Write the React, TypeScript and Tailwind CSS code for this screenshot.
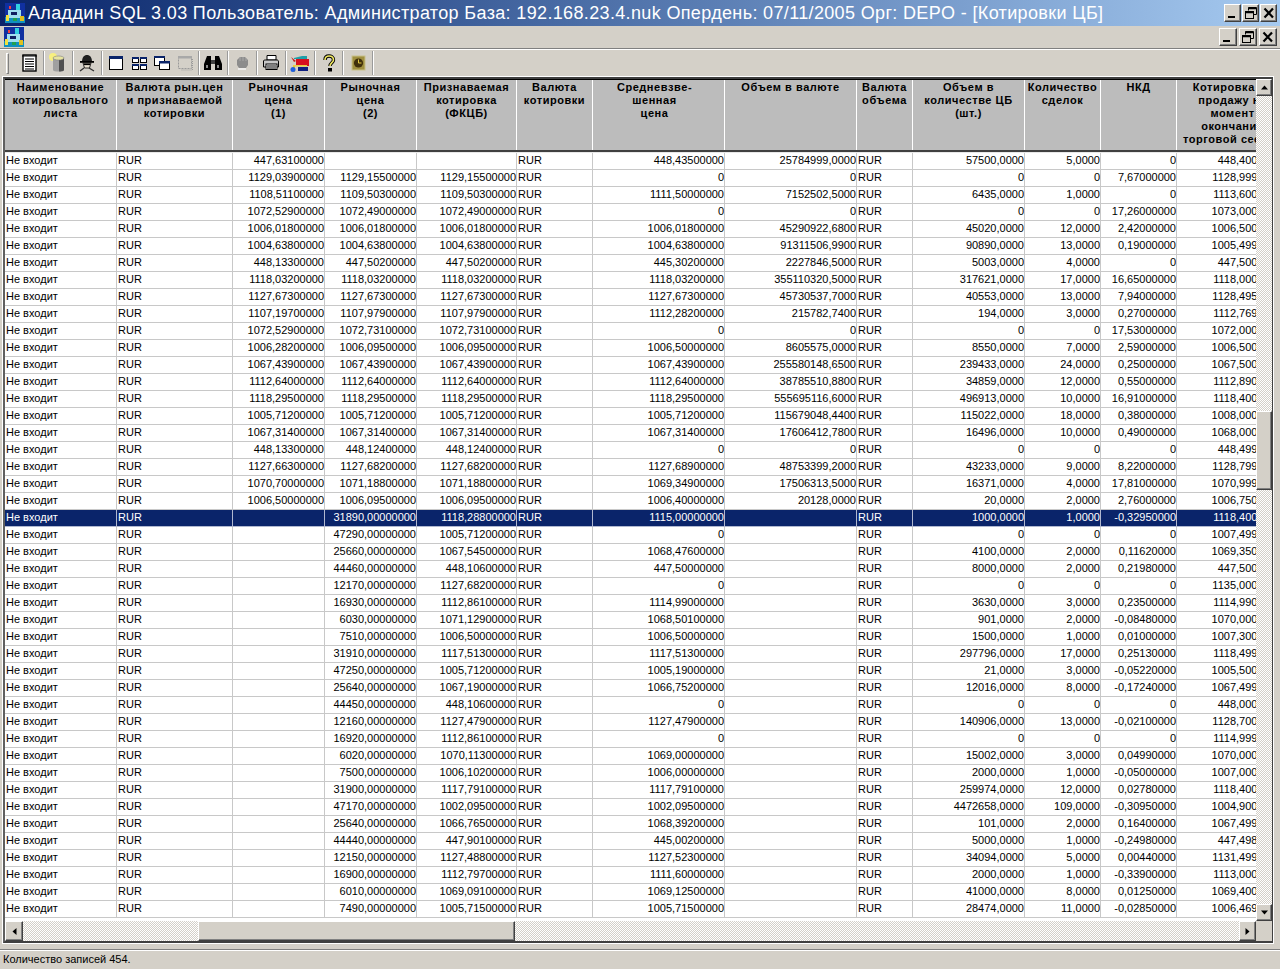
import React from "react";

const COLS = "grid-cols-[112px_116px_92px_92px_100px_76px_132px_132px_56px_112px_76px_76px_112px]";

const headers: string[][] = [
  ["Наименование", "котировального", "листа"],
  ["Валюта рын.цен", "и признаваемой", "котировки"],
  ["Рыночная", "цена", "(1)"],
  ["Рыночная", "цена", "(2)"],
  ["Признаваемая", "котировка", "(ФКЦБ)"],
  ["Валюта", "котировки"],
  ["Средневзве-", "шенная", "цена"],
  ["Объем в валюте"],
  ["Валюта", "объема"],
  ["Объем в", "количестве ЦБ", "(шт.)"],
  ["Количество", "сделок"],
  ["НКД"],
  ["Котировка на", "продажу на", "момент", "окончания", "торговой сессии"],
];

// p1|p2|p3|avg|vol|qty|deals|nkd|quote
const raw = `447,63100000|||448,43500000|25784999,0000|57500,0000|5,0000|0|448,40000000
1129,03900000|1129,15500000|1129,15500000|0|0|0|0|7,67000000|1128,99900000
1108,51100000|1109,50300000|1109,50300000|1111,50000000|7152502,5000|6435,0000|1,0000|0|1113,60000000
1072,52900000|1072,49000000|1072,49000000|0|0|0|0|17,26000000|1073,00000000
1006,01800000|1006,01800000|1006,01800000|1006,01800000|45290922,6800|45020,0000|12,0000|2,42000000|1006,50000000
1004,63800000|1004,63800000|1004,63800000|1004,63800000|91311506,9900|90890,0000|13,0000|0,19000000|1005,49900000
448,13300000|447,50200000|447,50200000|445,30200000|2227846,5000|5003,0000|4,0000|0|447,50000000
1118,03200000|1118,03200000|1118,03200000|1118,03200000|355110320,5000|317621,0000|17,0000|16,65000000|1118,00000000
1127,67300000|1127,67300000|1127,67300000|1127,67300000|45730537,7000|40553,0000|13,0000|7,94000000|1128,49500000
1107,19700000|1107,97900000|1107,97900000|1112,28200000|215782,7400|194,0000|3,0000|0,27000000|1112,76900000
1072,52900000|1072,73100000|1072,73100000|0|0|0|0|17,53000000|1072,00000000
1006,28200000|1006,09500000|1006,09500000|1006,50000000|8605575,0000|8550,0000|7,0000|2,59000000|1006,50000000
1067,43900000|1067,43900000|1067,43900000|1067,43900000|255580148,6500|239433,0000|24,0000|0,25000000|1067,50000000
1112,64000000|1112,64000000|1112,64000000|1112,64000000|38785510,8800|34859,0000|12,0000|0,55000000|1112,89000000
1118,29500000|1118,29500000|1118,29500000|1118,29500000|555695116,6000|496913,0000|10,0000|16,91000000|1118,40000000
1005,71200000|1005,71200000|1005,71200000|1005,71200000|115679048,4400|115022,0000|18,0000|0,38000000|1008,00000000
1067,31400000|1067,31400000|1067,31400000|1067,31400000|17606412,7800|16496,0000|10,0000|0,49000000|1068,00000000
448,13300000|448,12400000|448,12400000|0|0|0|0|0|448,49900000
1127,66300000|1127,68200000|1127,68200000|1127,68900000|48753399,2000|43233,0000|9,0000|8,22000000|1128,79900000
1070,70000000|1071,18800000|1071,18800000|1069,34900000|17506313,5000|16371,0000|4,0000|17,81000000|1070,99900000
1006,50000000|1006,09500000|1006,09500000|1006,40000000|20128,0000|20,0000|2,0000|2,76000000|1006,75000000
|31890,00000000|1118,28800000|1115,00000000||1000,0000|1,0000|-0,32950000|1118,40000000
|47290,00000000|1005,71200000|0||0|0|0|1007,49900000
|25660,00000000|1067,54500000|1068,47600000||4100,0000|2,0000|0,11620000|1069,35000000
|44460,00000000|448,10600000|447,50000000||8000,0000|2,0000|0,21980000|447,50000000
|12170,00000000|1127,68200000|0||0|0|0|1135,00000000
|16930,00000000|1112,86100000|1114,99000000||3630,0000|3,0000|0,23500000|1114,99000000
|6030,00000000|1071,12900000|1068,50100000||901,0000|2,0000|-0,08480000|1070,00000000
|7510,00000000|1006,50000000|1006,50000000||1500,0000|1,0000|0,01000000|1007,30000000
|31910,00000000|1117,51300000|1117,51300000||297796,0000|17,0000|0,25130000|1118,49900000
|47250,00000000|1005,71200000|1005,19000000||21,0000|3,0000|-0,05220000|1005,50000000
|25640,00000000|1067,19000000|1066,75200000||12016,0000|8,0000|-0,17240000|1067,49900000
|44450,00000000|448,10600000|0||0|0|0|448,00000000
|12160,00000000|1127,47900000|1127,47900000||140906,0000|13,0000|-0,02100000|1128,70000000
|16920,00000000|1112,86100000|0||0|0|0|1114,99900000
|6020,00000000|1070,11300000|1069,00000000||15002,0000|3,0000|0,04990000|1070,00000000
|7500,00000000|1006,10200000|1006,00000000||2000,0000|1,0000|-0,05000000|1007,00000000
|31900,00000000|1117,79100000|1117,79100000||259974,0000|12,0000|0,02780000|1118,40000000
|47170,00000000|1002,09500000|1002,09500000||4472658,0000|109,0000|-0,30950000|1004,90000000
|25640,00000000|1066,76500000|1068,39200000||101,0000|2,0000|0,16400000|1067,49900000
|44440,00000000|447,90100000|445,00200000||5000,0000|1,0000|-0,24980000|447,49800000
|12150,00000000|1127,48800000|1127,52300000||34094,0000|5,0000|0,00440000|1131,49900000
|16900,00000000|1112,79700000|1111,60000000||2000,0000|1,0000|-0,33900000|1113,00000000
|6010,00000000|1069,09100000|1069,12500000||41000,0000|8,0000|0,01250000|1069,40000000
|7490,00000000|1005,71500000|1005,71500000||28474,0000|11,0000|-0,02850000|1006,46900000`;

const rows = raw.split("\n").map((l) => l.split("|"));

const raised =
  "bg-[#d4d0c8] border border-t-white border-l-white border-r-[#404040] border-b-[#404040] shadow-[inset_-1px_-1px_0_#808080]";
const dither =
  "bg-[repeating-conic-gradient(#d4d0c8_0_25%,#ffffff_0_50%)] bg-[length:2px_2px]";

function AppIcon() {
  return (
    <svg width="20" height="20" viewBox="0 0 20 20">
      <rect x="0" y="0" width="20" height="20" fill="#1030a0" />
      <rect x="0" y="14" width="20" height="6" fill="#1090c0" />
      <rect x="11" y="1" width="4" height="6" fill="#30d0e0" />
      <rect x="3" y="7" width="13" height="8" fill="#a0e0f0" />
      <rect x="6" y="9" width="6" height="3" fill="#102060" />
      <rect x="1" y="12" width="3" height="6" fill="#f0e040" />
      <rect x="15" y="13" width="4" height="5" fill="#e0c020" />
      <rect x="8" y="15" width="4" height="3" fill="#20a050" />
      <rect x="4" y="3" width="2" height="3" fill="#f04040" />
    </svg>
  );
}

function Cap({ kind }: { kind: "min" | "max" | "close" }) {
  return (
    <svg width="14" height="14" viewBox="0 0 14 14">
      {kind === "min" && <rect x="2" y="10" width="7" height="2" fill="#000" />}
      {kind === "max" && (
        <g fill="none" stroke="#000">
          <path d="M4.5 4.5V1.5H12.5V8.5H9.5" />
          <path d="M4 2.5H12" strokeWidth="1.5" />
          <rect x="1.5" y="5.5" width="8" height="7" />
          <path d="M1 6.5H10" strokeWidth="1.5" />
        </g>
      )}
      {kind === "close" && (
        <path d="M2.5 2.5L11 11.5M11 2.5L2.5 11.5" stroke="#000" strokeWidth="2.2" fill="none" />
      )}
    </svg>
  );
}

function CapButtons({ gap, w }: { gap: string; w: string }) {
  return (
    <div className={`flex ${gap}`}>
      {(["min", "max", "close"] as const).map((k) => (
        <div key={k} className={`${raised} ${w} h-[18px] flex items-center justify-center`}>
          <Cap kind={k} />
        </div>
      ))}
    </div>
  );
}

const S = ({ children }: { children: React.ReactNode }) => (
  <svg width="20" height="20" viewBox="0 0 20 20">
    {children}
  </svg>
);

const toolIcons: React.ReactNode[] = [
  <S key="1">
    <rect x="4" y="2" width="13" height="16" fill="#fff" stroke="#000" strokeWidth="1.4" />
    <path d="M3 3H18M6 6H15M6 8.5H15M6 11H15M6 13.5H15M6 16H15" stroke="#000" strokeWidth="1.2" />
  </S>,
  <S key="2">
    <circle cx="5" cy="4" r="4" fill="#f8f080" />
    <path d="M5 5H16V17C16 19 5 19 5 17Z" fill="#a0a0a0" />
    <path d="M11 5H16V17C16 18 13 18.5 11 18.5Z" fill="#505050" />
    <ellipse cx="10.5" cy="5" rx="5.5" ry="2" fill="#e8e4a0" stroke="#808080" strokeWidth=".6" />
  </S>,
  <S key="3">
    <path d="M5 9C5 3 8 2 10 2S15 3 15 9Z" fill="#202020" />
    <rect x="3" y="8" width="14" height="1.8" fill="#000" />
    <path d="M6 10H14L12.5 15H7.5Z" fill="#e8e0d0" stroke="#000" strokeWidth=".8" />
    <rect x="7" y="10.5" width="6" height="1.6" fill="#000" />
    <path d="M3 18L7 15M17 18L12 15" stroke="#303030" strokeWidth="1.4" />
  </S>,
  <S key="4">
    <rect x="3.5" y="3.5" width="13" height="13" fill="#fff" stroke="#000" />
    <rect x="3" y="3" width="14" height="3" fill="#0a246a" />
  </S>,
  <S key="5">
    {[[3, 4], [11, 4], [3, 11], [11, 11]].map(([x, y]) => (
      <g key={`${x}${y}`}>
        <rect x={x + 0.5} y={y + 0.5} width="6" height="5" fill="#fff" stroke="#000" />
        <rect x={x} y={y} width="7" height="2" fill="#0a246a" />
      </g>
    ))}
  </S>,
  <S key="6">
    <rect x="2.5" y="3.5" width="10" height="9" fill="#fff" stroke="#000" />
    <rect x="2" y="3" width="11" height="2" fill="#0a246a" />
    <rect x="7.5" y="8.5" width="10" height="8" fill="#fff" stroke="#000" />
    <rect x="7" y="8" width="11" height="2.5" fill="#0a246a" />
  </S>,
  <S key="7">
    <rect x="3.5" y="3.5" width="13" height="12" fill="none" stroke="#9a9a9a" strokeDasharray="2 1" />
    <rect x="3" y="3" width="14" height="2.5" fill="#a8a8a8" />
    <path d="M17.5 6V17H6" stroke="#9a9a9a" strokeDasharray="1 1" fill="none" />
  </S>,
  <S key="8">
    <path d="M4 3H8V7H9V11H8V17H1V11Z" fill="#000" />
    <path d="M12 3H16L19 11V17H12V11H11V7H12Z" fill="#000" />
    <rect x="8" y="7" width="4" height="4" fill="#404040" />
    <rect x="3" y="12" width="2" height="3" fill="#888" />
    <rect x="14" y="12" width="2" height="3" fill="#888" />
  </S>,
  <S key="9">
    <path d="M5 7L8 4H13L16 7V12L14 15H7L5 12Z" fill="#8c8c8c" />
    <path d="M6 16H14" stroke="#f4f4f4" strokeWidth="1.5" />
    <path d="M8 4V8M11 4V8M14 5V8" stroke="#a8a8a8" />
  </S>,
  <S key="10">
    <path d="M6 2.5H15V7H6Z" fill="#fff" stroke="#000" />
    <path d="M2.5 8C2.5 7 4 7 5 7H16C17 7 17.5 7.5 17.5 9V14H2.5Z" fill="#c8c8c8" stroke="#000" />
    <rect x="5" y="11" width="11" height="5.5" fill="#fff" stroke="#000" />
    <path d="M6 13H15M6 15H15" stroke="#000" />
  </S>,
  <S key="11">
    <path d="M4 5L12 3H17V6H4Z" fill="#20a0a8" />
    <rect x="6" y="6" width="13" height="7" fill="#d81020" />
    <path d="M1 4L6 8L4 9Z" fill="#c02020" />
    <rect x="3" y="12" width="2" height="7" fill="#e0c020" />
    <rect x="3" y="12" width="14" height="1.5" fill="#e8d040" />
    <circle cx="3" cy="16.5" r="2.5" fill="#2060e0" />
    <rect x="8" y="14" width="10" height="4" fill="#102080" />
  </S>,
  <S key="12">
    <path
      d="M6 7C6 4 8 3 10 3S14.5 4 14.5 7C14.5 9.5 11 10 11 13"
      fill="none"
      stroke="#000"
      strokeWidth="3.4"
    />
    <path
      d="M6 7C6 4 8 3 10 3S14.5 4 14.5 7C14.5 9.5 11 10 11 13"
      fill="none"
      stroke="#f0e860"
      strokeWidth="1.6"
    />
    <rect x="9" y="15" width="4" height="3.5" fill="#000" />
  </S>,
  <S key="13">
    <rect x="4" y="3" width="13" height="14" fill="#a09040" />
    <rect x="4" y="3" width="13" height="14" fill="none" stroke="#c8c088" />
    <circle cx="10.5" cy="10" r="4.6" fill="#40300c" />
    <path d="M10.5 6.5V10H13.5" stroke="#e0c840" fill="none" />
  </S>,
];

const groups: number[][] = [[0], [1], [2], [3, 4, 5, 6], [7], [8], [9], [10], [11], [12]];
const groupW = ["w-[29px]", "w-[29px]", "w-[29px]", "w-[97px]", "w-[29px]", "w-[29px]", "w-[29px]", "w-[29px]", "w-[28px]", "w-[30px]"];

function Arrow({ dir }: { dir: "up" | "down" | "left" | "right" }) {
  const p = {
    up: "M1 6.5L4.5 2.5L8 6.5Z",
    down: "M1 2.5L4.5 6.5L8 2.5Z",
    left: "M6.5 1L2.5 4.5L6.5 8Z",
    right: "M2.5 1L6.5 4.5L2.5 8Z",
  }[dir];
  return (
    <svg width="9" height="9" viewBox="0 0 9 9">
      <path d={p} fill="#000" />
    </svg>
  );
}

export default function App() {
  return (
    <div className="w-[1280px] h-[969px] overflow-hidden flex flex-col bg-[#d4d0c8] font-['Liberation_Sans',Arial,sans-serif] text-black">
      {/* title bar */}
      <div className="h-[26px] shrink-0 flex items-center pl-[5px] pr-[3px] bg-gradient-to-r from-[#0a246a] to-[#a6caf0]">
        <AppIcon />
        <span className="ml-[3px] text-[18px] leading-[26px] text-white whitespace-nowrap tracking-[0.35px]">
          Аладдин SQL 3.03 Пользователь: Администратор База: 192.168.23.4.nuk Опердень: 07/11/2005 Орг: DEPO - [Котировки ЦБ]
        </span>
        <div className="ml-auto">
          <CapButtons gap="gap-px" w="w-[17px]" />
        </div>
      </div>

      {/* menu row */}
      <div className="h-[23px] shrink-0 flex items-center pl-[4px] pr-[3px] border-b border-[#808080]">
        <AppIcon />
        <div className="ml-auto">
          <CapButtons gap="gap-[2px]" w="w-[18px]" />
        </div>
      </div>

      {/* toolbar */}
      <div className="h-[27px] shrink-0 flex items-center border-t border-white pl-[6px]">
        <div className="w-[3px] h-[21px] border border-t-white border-l-white border-r-[#808080] border-b-[#808080] mr-[3px]" />
        <div className="w-[6px]" />
        {groups.map((g, i) => (
          <div
            key={i}
            className={`${groupW[i]} ${i === 0 ? "-ml-[3px] w-[26px]" : ""} h-[24px] flex items-center justify-center gap-[3px] border-r border-r-[#9a9a9a] shadow-[1px_0_0_#ffffff]`}
          >
            {g.map((n) => (
              <div key={n} className="w-[20px] h-[20px]">
                {toolIcons[n]}
              </div>
            ))}
          </div>
        ))}
      </div>

      {/* grid frame */}
      <div className="mt-[1px] ml-[3px] w-[1270px] h-[866px] shrink-0 flex flex-col border-t-2 border-l-2 border-r border-b-2 border-t-[#404040] border-l-[#606060] border-r-[#404040] border-b-[#404040] outline outline-1 outline-white">
        <div className="flex h-[842px]">
          <div className="w-[1251px] overflow-hidden bg-white">
            {/* header */}
            <div className={`grid ${COLS} w-[1284px] h-[73px] bg-[#bcbcbc] border-b-2 border-[#404040] border-t border-t-black`}>
              {headers.map((h, i) => (
                <div
                  key={i}
                  className={`border-r border-white h-full pt-[1px] text-center text-[11px] leading-[13px] font-bold tracking-[0.55px] whitespace-nowrap overflow-hidden ${i === 6 ? "pr-[8px]" : ""}`}
                >
                  {h.map((t, j) => (
                    <div key={j}>{t}</div>
                  ))}
                </div>
              ))}
            </div>
            {/* rows */}
            <div className="border-t border-[#e8e8e8]">
              {rows.map((r, i) => {
                const sel = i === 21;
                const [p1, p2, p3, avg, vol, qty, deals, nkd, quote] = r;
                const line = sel ? "border-[#b0b8d0]" : "border-[#c8c8c8]";
                const cells: [string, boolean][] = [
                  ["Не входит", false],
                  ["RUR", false],
                  [p1, true],
                  [p2, true],
                  [p3, true],
                  ["RUR", false],
                  [avg, true],
                  [vol, true],
                  ["RUR", false],
                  [qty, true],
                  [deals, true],
                  [nkd, true],
                  [quote, true],
                ];
                return (
                  <div
                    key={i}
                    className={`grid ${COLS} w-[1284px] h-[17px] ${sel ? "bg-[#0a246a] text-white" : "bg-white text-black"}`}
                  >
                    {cells.map(([t, right], j) => (
                      <div
                        key={j}
                        className={`border-r border-b ${line} h-[17px] overflow-hidden whitespace-nowrap text-[11px] leading-[15px] pl-[1px] ${right ? "text-right" : "text-left"} ${j === 12 ? "pr-0" : ""}`}
                      >
                        {t}
                      </div>
                    ))}
                  </div>
                );
              })}
            </div>
          </div>
          {/* vertical scrollbar */}
          <div className="w-[16px] shrink-0 flex flex-col">
            <div className={`${raised} h-[17px] flex items-center justify-center`}>
              <Arrow dir="up" />
            </div>
            <div className={`${dither} h-[315px]`} />
            <div className={`${raised} h-[79px]`} />
            <div className={`${dither} flex-1`} />
            <div className={`${raised} h-[17px] flex items-center justify-center`}>
              <Arrow dir="down" />
            </div>
          </div>
        </div>
        {/* horizontal scrollbar */}
        <div className="flex h-[18px] flex-1">
          <div className="w-[1251px] flex">
            <div className={`${raised} w-[18px] flex items-center justify-center`}>
              <Arrow dir="left" />
            </div>
            <div className={`${dither} w-[175px]`} />
            <div className={`${raised} w-[317px]`} />
            <div className={`${dither} flex-1`} />
            <div className={`${raised} w-[17px] flex items-center justify-center`}>
              <Arrow dir="right" />
            </div>
          </div>
          <div className="w-[16px]" />
        </div>
      </div>

      {/* status bar */}
      <div className="mt-[6px] ml-0 h-[18px] shrink-0 border-t border-[#808080] shadow-[inset_0_1px_0_#ffffff] pl-[3px] text-[11px] leading-[16px] pt-[1px]">
        Количество записей 454.
      </div>
    </div>
  );
}
